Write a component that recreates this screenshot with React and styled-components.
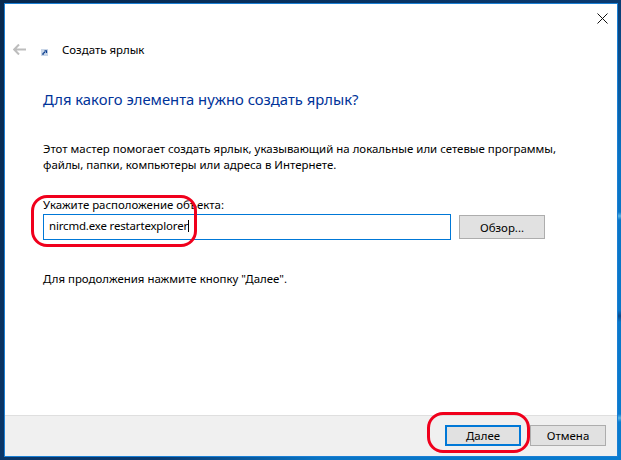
import styled, { createGlobalStyle } from 'styled-components';

const Global = createGlobalStyle`
  html, body {
    margin: 0;
    padding: 0;
  }
  body {
    font-family: "Noto Sans", "Open Sans", sans-serif;
    font-size: 11.45px;
    color: #000;
  }
`

export default function App() {
  return (
    <Desktop>
      <Global />
      <Window>
        <TitleBar>
          <CloseIcon width="11" height="11" viewBox="0 0 11 11">
            <path d="M0.5 0.5 L10.5 10.5 M10.5 0.5 L0.5 10.5" stroke="#111" strokeWidth="1" fill="none" />
          </CloseIcon>
        </TitleBar>
        <WizardHead>
          <BackIcon width="13" height="11" viewBox="0 0 13 11">
            <path d="M6 0.5 L1.2 5.5 L6 10.5 M1.5 5.5 L13 5.5" stroke="#bdbdbd" strokeWidth="2" fill="none" />
          </BackIcon>
          <ShortcutIcon width="7" height="7" viewBox="0 0 7 7">
            <rect width="7" height="7" fill="#c9d6e8" />
            <path d="M2 6 L2 4.5 L4 3 M3.5 1.8 L5.5 1.8 L5.5 4" stroke="#0b3f8f" strokeWidth="1.2" fill="none" />
          </ShortcutIcon>
          <WizardName>Создать ярлык</WizardName>
        </WizardHead>
        <Body>
          <Heading>Для какого элемента нужно создать ярлык?</Heading>
          <Intro>
            Этот мастер помогает создать ярлык, указывающий на локальные или сетевые программы,
            <br />
            файлы, папки, компьютеры или адреса в Интернете.
          </Intro>
          <FieldLabel>Укажите расположение объекта:</FieldLabel>
          <FieldRow>
            <Field>
              nircmd.exe restartexplorer
              <Caret />
            </Field>
            <BrowseButton $width={86} $height={24}>Обзор...</BrowseButton>
          </FieldRow>
          <Hint>Для продолжения нажмите кнопку "Далее".</Hint>
        </Body>
        <Footer>
          <Button $width={76} $height={21} $primary>Далее</Button>
          <Button $width={76} $height={21}>Отмена</Button>
        </Footer>
        <Ring $left={26} $top={191} $width={166} $height={52} />
        <Ring $left={422} $top={408} $width={103} $height={41} />
      </Window>
    </Desktop>
  )
}

const Desktop = styled.div`
  width: 621px;
  height: 460px;
  box-sizing: border-box;
  padding: 3px 3px 3px 4px;
  overflow: hidden;
  background:
    linear-gradient(to bottom, transparent 212px, #5ab4e4 216px, transparent 220px, transparent 310px, #0a4a8c 316px, transparent 322px, transparent 414px, #5ab4e4 418px, transparent 422px) right top / 3px 100% no-repeat,
    linear-gradient(135deg, #07284d 0%, #0a3a70 57%, #0a74c4 72%, #0a7ccf 100%);
`

const Window = styled.div`
  position: relative;
  height: 100%;
  box-sizing: border-box;
  border: 1px solid #1a7fd4;
  background: #fff;
  display: flex;
  flex-direction: column;
`

const TitleBar = styled.div`
  height: 27px;
  display: flex;
  justify-content: flex-end;
  align-items: flex-start;
  padding: 9px 9px 0 0;
  box-sizing: border-box;
`

const CloseIcon = styled.svg`
  display: block;
`

const WizardHead = styled.div`
  height: 36px;
  display: flex;
  align-items: center;
  padding-left: 8px;
`

const BackIcon = styled.svg`
  display: block;
`

const ShortcutIcon = styled.svg`
  display: block;
  margin: 7px 0 0 15px;
`

const WizardName = styled.span`
  margin-left: 14px;
`

const Body = styled.div`
  flex: 1;
  padding: 0 0 0 38px;
`

const Heading = styled.h1`
  margin: 21px 0 0;
  font-size: 14.8px;
  line-height: 22px;
  font-weight: 400;
  color: #003399;
`

const Intro = styled.p`
  margin: 31px 0 0;
  line-height: 16px;
`

const FieldLabel = styled.div`
  margin-top: 24px;
  line-height: 16px;
`

const FieldRow = styled.div`
  margin-top: 1px;
  display: flex;
  align-items: flex-start;
  gap: 8px;
`

const Field = styled.div`
  width: 408px;
  height: 26px;
  box-sizing: border-box;
  border: 1px solid #0078d7;
  padding: 0 0 3px 5px;
  display: flex;
  align-items: center;
  letter-spacing: -0.15px;
`

const Caret = styled.span`
  width: 1px;
  height: 12px;
  background: #000;
`

const Button = styled.div`
  width: ${props => props.$width}px;
  height: ${props => props.$height}px;
  box-sizing: border-box;
  border: ${props => props.$primary ? '2px solid #0078d7' : '1px solid #adadad'};
  background: #e1e1e1;
  display: flex;
  align-items: center;
  justify-content: center;
`

const BrowseButton = styled(Button)`
  margin-top: 1px;
`

const Hint = styled.div`
  margin-top: 31px;
  line-height: 16px;
`

const Footer = styled.div`
  height: 41px;
  box-sizing: border-box;
  border-top: 1px solid #dfdfdf;
  background: #f0f0f0;
  display: flex;
  justify-content: flex-end;
  gap: 9px;
  padding: 9px 11px 0 0;
`

const Ring = styled.div`
  position: absolute;
  left: ${props => props.$left}px;
  top: ${props => props.$top}px;
  width: ${props => props.$width}px;
  height: ${props => props.$height}px;
  box-sizing: border-box;
  border: 3px solid #f0001c;
  border-radius: 16px;
`
